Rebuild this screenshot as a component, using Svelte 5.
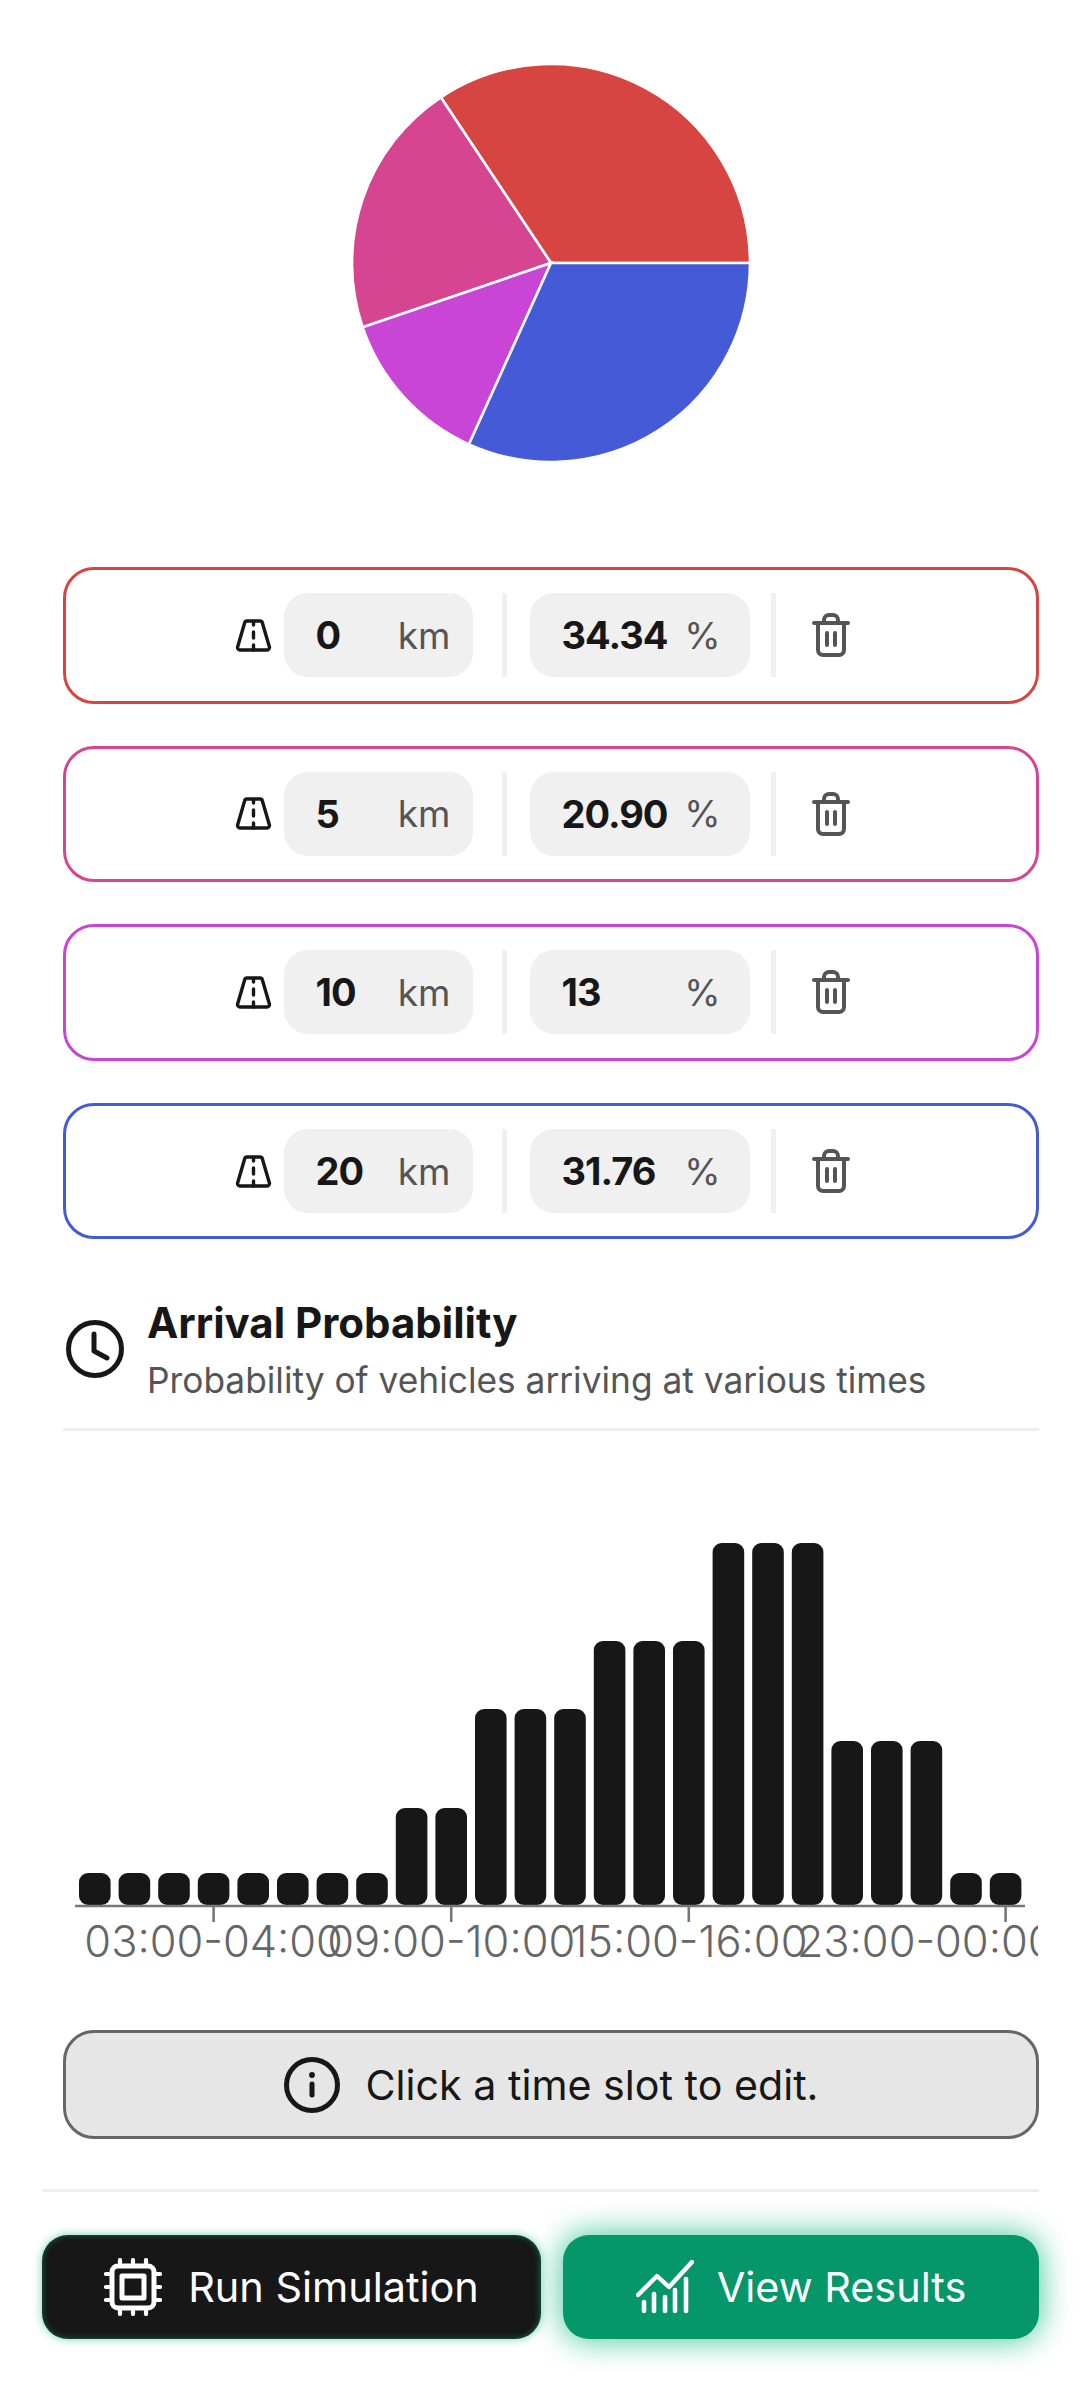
<script lang="ts">
  const slices = [
    { start: 0, km: 0, pct: '34.34', value: 34.34, color: '#d64541' },
    { start: 1, km: 5, pct: '20.90', value: 20.9, color: '#d64592' },
    { start: 2, km: 10, pct: '13', value: 13, color: '#c945d6' },
    { start: 3, km: 20, pct: '31.76', value: 31.76, color: '#455ad6' }
  ]

  // pie goes counter-clockwise from 3 o'clock
  const cx = 200
  const cy = 200
  const r = 199
  let acc = 0
  const sectors = slices.map((s) => {
    const a0 = (acc / 100) * Math.PI * 2
    acc += s.value
    const a1 = (acc / 100) * Math.PI * 2
    const large = a1 - a0 > Math.PI ? 1 : 0
    const x0 = cx + r * Math.cos(a0)
    const y0 = cy - r * Math.sin(a0)
    const x1 = cx + r * Math.cos(a1)
    const y1 = cy - r * Math.sin(a1)
    return { d: `M${cx} ${cy}L${x0} ${y0}A${r} ${r} 0 ${large} 0 ${x1} ${y1}Z`, color: s.color }
  })

  const heights = [
    32, 32, 32, 32, 32, 32, 32, 32,
    97, 97,
    196, 196, 196,
    264, 264, 264,
    362, 362, 362,
    164, 164, 164,
    32, 32
  ]
  const baseY = 416
  const barX = (i: number) => 16 + 39.6 * i
  // the last label is pushed left of its tick and still runs off the chart
  const ticks = [
    { i: 3, label: '03:00-04:00', shift: 0 },
    { i: 9, label: '09:00-10:00', shift: 0 },
    { i: 15, label: '15:00-16:00', shift: 0 },
    { i: 23, label: '23:00-00:00', shift: -80 }
  ]
</script>

<div class="page">
  <svg class="pie" width="400" height="400" viewBox="0 0 400 400">
    <circle {cx} {cy} r="200" fill="#eef0fb" />
    {#each sectors as s}
      <path d={s.d} fill={s.color} stroke="#fff" stroke-width="2.6" />
    {/each}
  </svg>

  <div class="rows">
    {#each slices as s}
      <div class="row" style="border-color: {s.color}">
        <svg class="road" width="37" height="33" viewBox="0 0 37 33" fill="none" stroke="#171717" stroke-width="3.4" stroke-linecap="round" stroke-linejoin="round">
          <path d="M12 2h13a2.5 2.5 0 0 1 2.4 1.9l7 24a2.5 2.5 0 0 1-2.4 3.1H5a2.5 2.5 0 0 1-2.4-3.1l7-24A2.5 2.5 0 0 1 12 2z" />
          <path d="M18.5 3v3M18.5 13v6M18.5 26v5" />
        </svg>
        <div class="field km">
          <span class="num">{s.km}</span>
          <span class="unit">km</span>
        </div>
        <div class="sep sep-a"></div>
        <div class="field pct">
          <span class="num">{s.pct}</span>
          <span class="unit">%</span>
        </div>
        <div class="sep sep-b"></div>
        <svg class="trash" width="38" height="44" viewBox="0 0 38 44" fill="none" stroke="#555" stroke-width="4" stroke-linecap="round" stroke-linejoin="round">
          <path d="M2 10h34" />
          <path d="M12 10V7a5 5 0 0 1 5-5h4a5 5 0 0 1 5 5v3" />
          <path d="M6 10v27a5 5 0 0 0 5 5h16a5 5 0 0 0 5-5V10" />
          <path d="M15 20v12M23 20v12" />
        </svg>
      </div>
    {/each}
  </div>

  <div class="heading">
    <svg width="58" height="58" viewBox="0 0 58 58" fill="none" stroke="#171717" stroke-width="5" stroke-linecap="round" stroke-linejoin="round">
      <circle cx="29" cy="29" r="26.5" />
      <path d="M28 14v17l13 7" />
    </svg>
    <div>
      <h2>Arrival Probability</h2>
      <p>Probability of vehicles arriving at various times</p>
    </div>
  </div>

  <svg class="chart" width="975" height="500" viewBox="0 0 975 500">
    {#each heights as h, i}
      <rect x={barX(i)} y={baseY - h - 1} width="31.6" height={h} rx="9" fill="#171717" />
    {/each}
    <line x1="12" x2="962" y1={baseY} y2={baseY} stroke="#777" stroke-width="2.6" />
    {#each ticks as t}
      <line x1={barX(t.i) + 15.8} x2={barX(t.i) + 15.8} y1={baseY} y2={baseY + 16} stroke="#777" stroke-width="2.6" />
      <text x={barX(t.i) + 15.8 + t.shift} y={baseY + 51} text-anchor="middle">{t.label}</text>
    {/each}
  </svg>

  <div class="note">
    <svg width="56" height="56" viewBox="0 0 56 56" fill="none" stroke="#171717" stroke-width="5" stroke-linecap="round">
      <circle cx="28" cy="28" r="25.5" />
      <path d="M28 27v11" />
      <circle cx="28" cy="18" r="1.4" fill="#171717" stroke-width="3" />
    </svg>
    <span>Click a time slot to edit.</span>
  </div>

  <div class="actions">
    <button class="run">
      <svg width="58" height="58" viewBox="0 0 58 58" fill="none" stroke="#fff" stroke-linecap="round" stroke-linejoin="round">
        <rect x="8" y="8" width="42" height="42" rx="6" stroke-width="5" />
        <rect x="18" y="18" width="22" height="22" stroke-width="5" />
        <path d="M16 2v3M29 2v3M42 2v3M16 53v3M29 53v3M42 53v3M2 16h3M2 29h3M2 42h3M53 16h3M53 29h3M53 42h3" stroke-width="4.2" />
      </svg>
      Run Simulation
    </button>
    <button class="results">
      <svg width="58" height="54" viewBox="0 0 58 54" fill="none" stroke="#fff" stroke-linecap="round" stroke-linejoin="round">
        <path d="M2 35l19-19 12 11L56 2" stroke-width="4.4" />
        <path d="M8 42v9M18 34v17M29 37v14M39 30v21M50 19v32" stroke-width="4.6" />
      </svg>
      View Results
    </button>
  </div>
</div>

<style>
  :global(body) {
    margin: 0;
    background: #fff;
  }

  .page {
    box-sizing: border-box;
    width: 1080px;
    height: 2398px;
    padding: 63px 41px 0 63px;
    font-family: Inter, sans-serif;
    color: #171717;
    overflow: hidden;
  }

  .pie {
    display: block;
    margin: 0 auto 104px;
  }

  .rows {
    display: flex;
    flex-direction: column;
    gap: 42px;
  }

  .row {
    box-sizing: border-box;
    height: 136.6px;
    border: 3px solid;
    border-radius: 31px;
    display: flex;
    align-items: center;
    justify-content: center;
    padding-right: 18px;
  }

  .road {
    margin-right: 12px;
  }

  .field {
    box-sizing: border-box;
    height: 84px;
    background: #f0f0f0;
    border-radius: 24px;
    display: flex;
    align-items: center;
    justify-content: space-between;
    padding: 0 22px 0 32px;
  }

  .km {
    width: 189px;
  }

  .pct {
    width: 220px;
    padding-right: 29px;
  }

  .num {
    font-size: 38px;
    font-weight: 700;
    letter-spacing: -1px;
  }

  .unit {
    font-size: 37px;
    color: #555;
  }

  .sep {
    width: 5px;
    height: 84px;
    background: #f0f0f0;
  }

  .sep-a {
    margin: 0 23px 0 29px;
  }

  .sep-b {
    margin: 0 36px 0 21px;
  }

  .heading {
    display: flex;
    align-items: center;
    gap: 23px;
    margin-top: 57px;
    padding: 0 0 22px 3px;
    border-bottom: 3px solid #eeeeee;
  }

  .heading svg {
    margin-bottom: 5px;
  }

  h2 {
    margin: 0 0 6px;
    font-size: 42px;
    font-weight: 700;
    line-height: 54px;
  }

  .heading p {
    margin: 0;
    font-size: 35.3px;
    line-height: 50px;
    color: #555;
  }

  .chart {
    display: block;
    margin-top: 59px;
  }

  .chart text {
    font-size: 43.4px;
    font-weight: 300;
    fill: #666;
  }

  .note {
    box-sizing: border-box;
    height: 109px;
    margin-top: 40px;
    background: #e6e6e6;
    border: 3px solid #666;
    border-radius: 31px;
    display: flex;
    align-items: center;
    justify-content: center;
    gap: 26px;
    font-size: 41.2px;
  }

  .actions {
    display: flex;
    gap: 22px;
    margin: 50px 0 0 -21px;
    padding-top: 43px;
    border-top: 3px solid #eeeeee;
  }

  button {
    height: 104px;
    border: none;
    border-radius: 26px;
    display: flex;
    align-items: center;
    justify-content: center;
    gap: 26px;
    font-family: inherit;
    font-size: 41.4px;
    color: #fff;
  }

  .run {
    width: 499px;
    background: #171717;
    box-shadow: 0 0 10px rgba(16, 185, 129, 0.6), inset 0 0 6px rgba(16, 185, 129, 0.5);
  }

  .results {
    flex: 1;
    gap: 23px;
    background: #059669;
    box-shadow: 0 0 30px 3px rgba(16, 185, 129, 0.7);
  }
</style>
